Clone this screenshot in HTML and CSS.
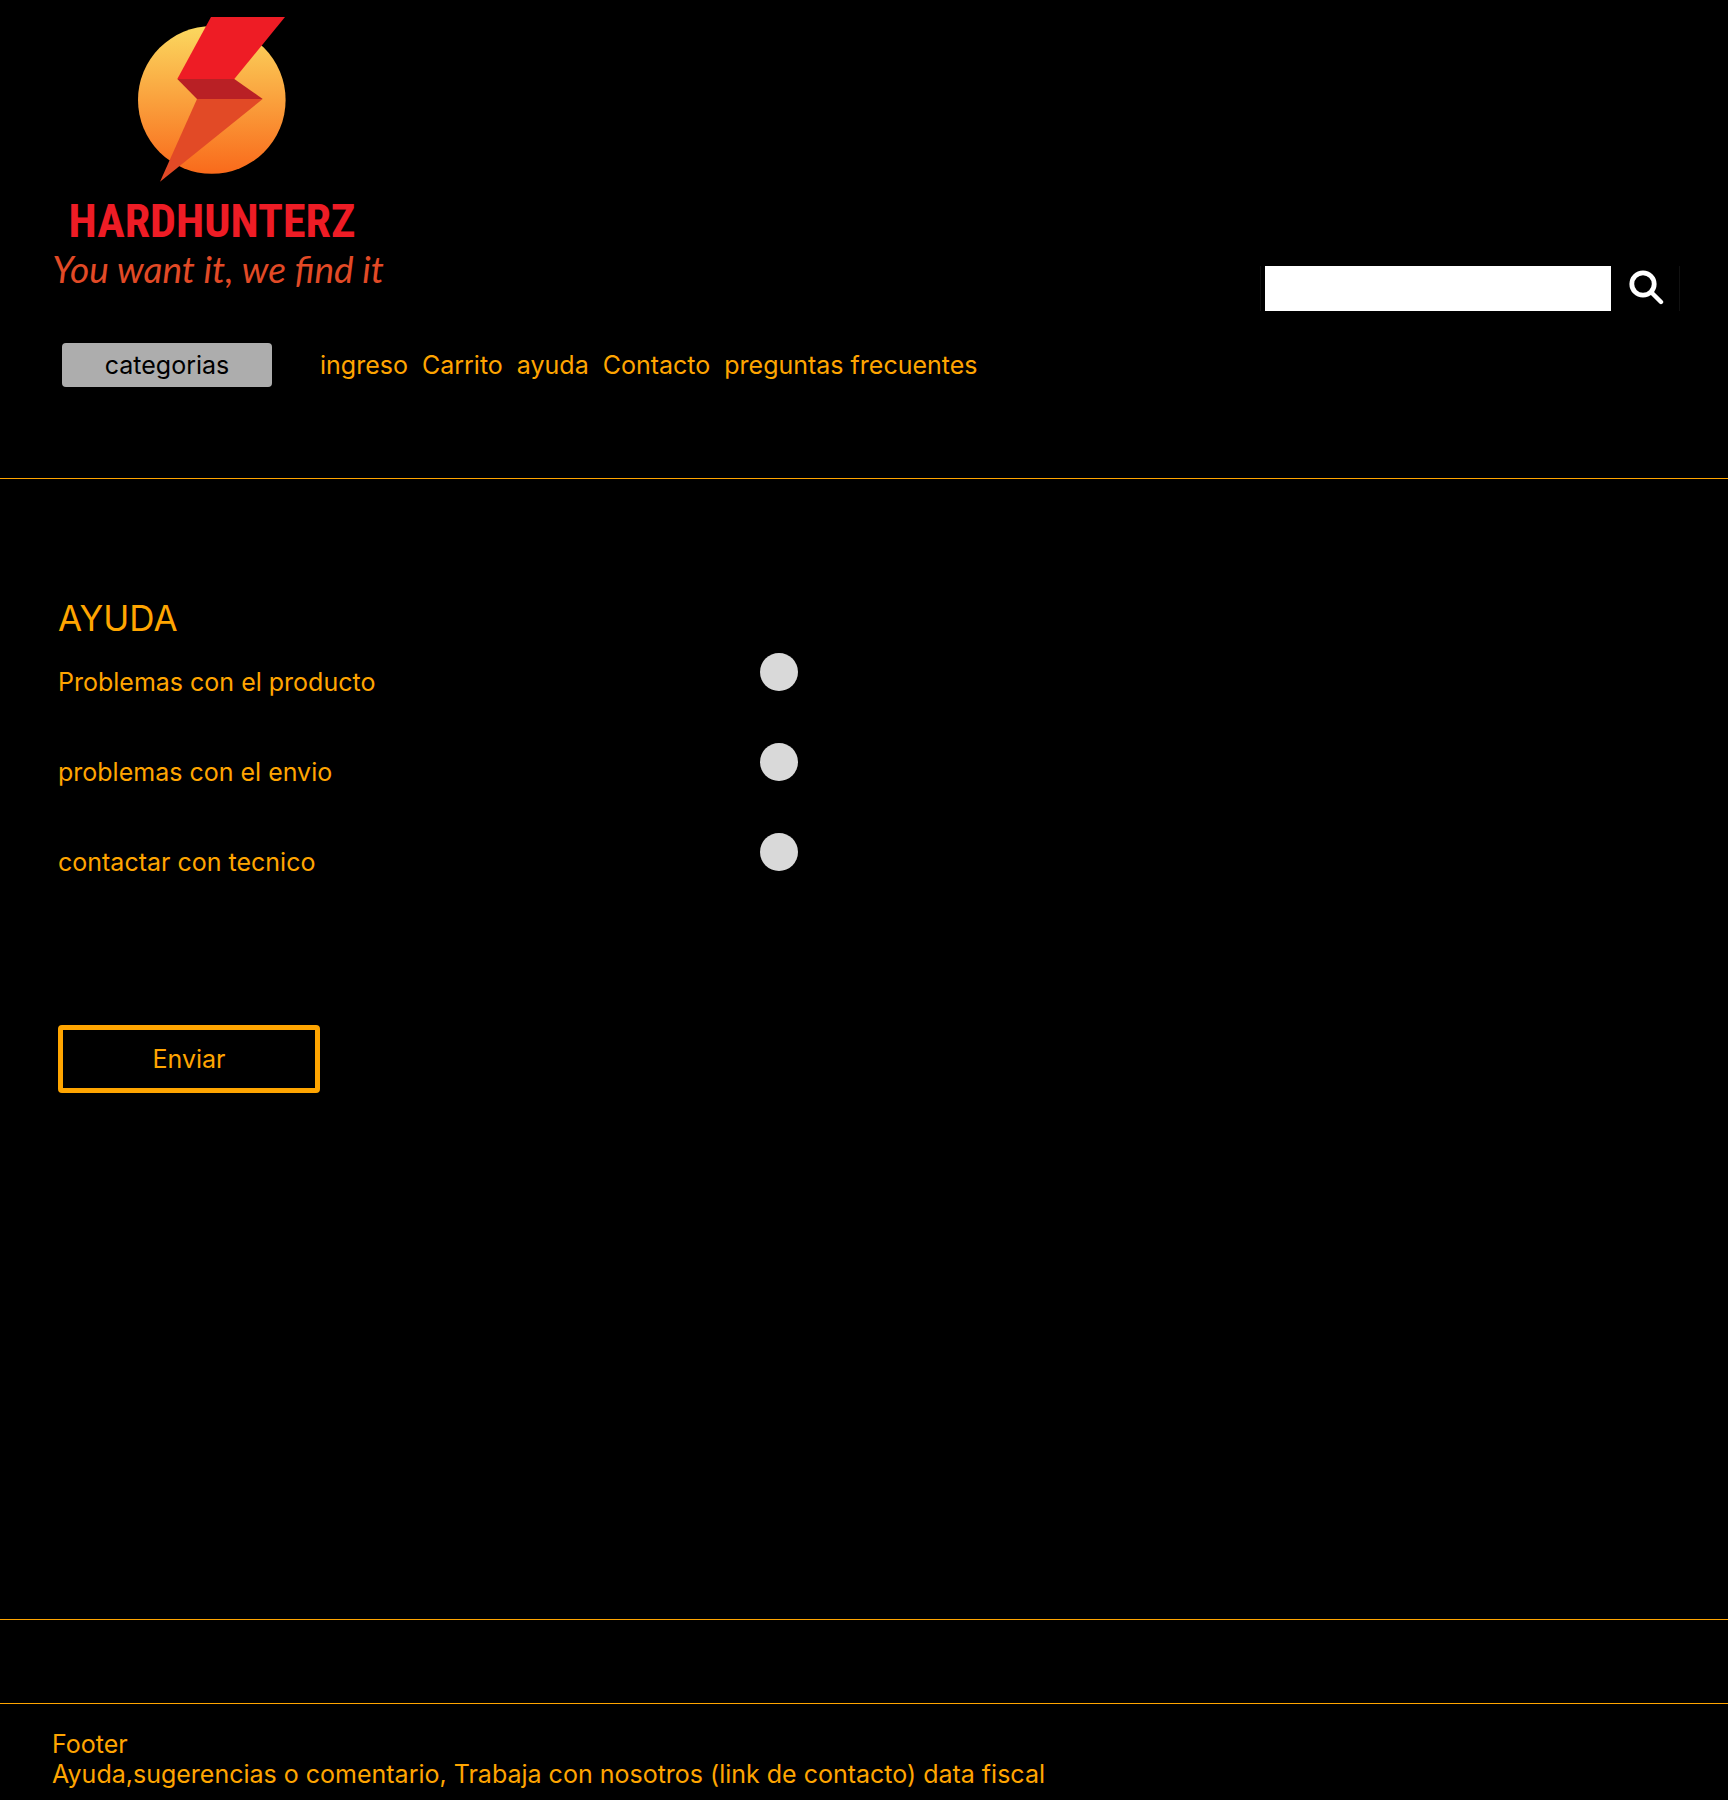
FILE: index.html
```html
<!DOCTYPE html>
<html lang="es">
<head>
  <meta charset="utf-8">
  <meta name="viewport" content="width=device-width, initial-scale=1">
  <title>Hardhunterz - Ayuda</title>
  <link rel="stylesheet" href="styles.css">
</head>
<body>
  <header class="header">
    <div class="header-top">
      <svg class="logo" viewBox="0 0 360 311" role="img" aria-label="Hardhunterz">
        <defs>
          <linearGradient id="sun" x1="0" y1="0" x2="0" y2="1">
            <stop offset="0" stop-color="#fbd85f"/>
            <stop offset="1" stop-color="#f96a1b"/>
          </linearGradient>
        </defs>
        <circle cx="171.8" cy="100" r="73.8" fill="url(#sun)"/>
        <path d="M171 17H245L194.300 79H137.300Z" fill="#ee1c25"/>
        <path d="M137.300 79H194.300L222.700 99H157Z" fill="#b92025"/>
        <path d="M157 99H222.700L120 181.700Z" fill="#e24a26"/>
        <text class="logo-name" x="172" y="237" text-anchor="middle">HARDHUNTERZ</text>
        <text class="logo-tagline" x="178" y="283" text-anchor="middle">You want it, we find it</text>
      </svg>
      <form class="search" role="search">
        <input class="search-input" type="search" aria-label="Buscar">
        <button class="search-button" type="button" aria-label="Buscar">
          <svg class="search-icon" viewBox="0 0 36 36" fill="none" stroke="#fff" aria-hidden="true">
            <circle cx="15" cy="15" r="11.200" stroke-width="4.800"/>
            <path d="M24 24L33 33" stroke-width="4.400" stroke-linecap="round"/>
          </svg>
        </button>
      </form>
    </div>
    <div class="header-nav">
      <button class="categories" type="button">categorias</button>
      <nav class="links">
        <a href="#">ingreso</a>
        <a href="#">Carrito</a>
        <a href="#">ayuda</a>
        <a href="#">Contacto</a>
        <a href="#">preguntas frecuentes</a>
      </nav>
    </div>
  </header>

  <main class="main">
    <h1 class="title">AYUDA</h1>
    <form>
      <div class="options">
        <div class="option">
          <label for="producto">Problemas con el producto</label>
          <input class="radio" type="radio" name="tema" id="producto">
        </div>
        <div class="option">
          <label for="envio">problemas con el envio</label>
          <input class="radio" type="radio" name="tema" id="envio">
        </div>
        <div class="option">
          <label for="tecnico">contactar con tecnico</label>
          <input class="radio" type="radio" name="tema" id="tecnico">
        </div>
      </div>
      <button class="submit" type="button">Enviar</button>
    </form>
  </main>

  <div class="band"></div>
  <footer class="footer">
    <p>Footer</p>
    <p>Ayuda,sugerencias o comentario, Trabaja con nosotros (link de contacto) data fiscal</p>
  </footer>
</body>
</html>
```
FILE: styles.css
```css
* {
  box-sizing: border-box;
}

body {
  display: flex;
  flex-direction: column;
  min-height: 100vh;
  margin: 0;
  background: #000;
  color: #ffa500;
  font: 400 25px/30px Inter, sans-serif;
}

button,
input {
  margin: 0;
  padding: 0;
  border: 0;
  font: inherit;
}

a {
  color: inherit;
  text-decoration: none;
}

.header {
  padding-bottom: 91px;
  border-bottom: 1px solid #ffa500;
}

.header-top {
  display: flex;
  flex-wrap: wrap;
  align-items: flex-end;
  justify-content: space-between;
  padding: 0 48px 0 40px;
}

.logo {
  display: block;
  width: 360px;
}

.logo-name {
  fill: #ee1c25;
  font: 700 46px "Roboto Condensed", Roboto, sans-serif;
}

.logo-tagline {
  fill: #e24a26;
  font: italic 400 37px Lato, sans-serif;
}

.search {
  display: flex;
  height: 45px;
  padding-left: 4px;
  border: solid #111;
  border-width: 0 1px;
}

.search-input {
  width: 346px;
  border-radius: 0;
  background: #fff;
  color: #000;
}

.search-button {
  display: flex;
  align-items: center;
  justify-content: center;
  width: 68px;
  padding-left: 2px;
  padding-bottom: 4px;
  background: transparent;
}

.search-icon {
  width: 36px;
  height: 36px;
}

.header-nav {
  display: flex;
  flex-wrap: wrap;
  align-items: center;
  gap: 48px;
  margin-top: 32px;
  padding: 0 62px;
}

.categories {
  width: 210px;
  height: 44px;
  border-radius: 4px;
  background: #adadad;
  color: #000;
}

.links {
  display: flex;
  flex-wrap: wrap;
  gap: 14px;
}

.main {
  flex: 1;
  padding: 118px 58px 64px;
}

.title {
  margin: 0 0 14px;
  font-size: 35px;
  font-weight: 400;
  line-height: 42px;
}

.options {
  display: grid;
  gap: 46px;
}

.option {
  display: grid;
  grid-template-columns: minmax(0, 702px) 38px;
  height: 44px;
}

.option label {
  align-self: end;
}

.radio {
  width: 38px;
  height: 38px;
  border-radius: 50%;
  background: #d9d9d9;
  appearance: none;
}

.radio:checked {
  border: 10px solid #ffa500;
}

.submit {
  width: 262px;
  height: 68px;
  margin-top: 148px;
  border: 5px solid #ffa500;
  border-radius: 4px;
  background: transparent;
  color: inherit;
}

.band {
  height: 84px;
  border-top: 1px solid #ffa500;
}

.footer {
  padding: 25px 52px 11px;
  border-top: 1px solid #ffa500;
}

.footer p {
  margin: 0;
}
```
